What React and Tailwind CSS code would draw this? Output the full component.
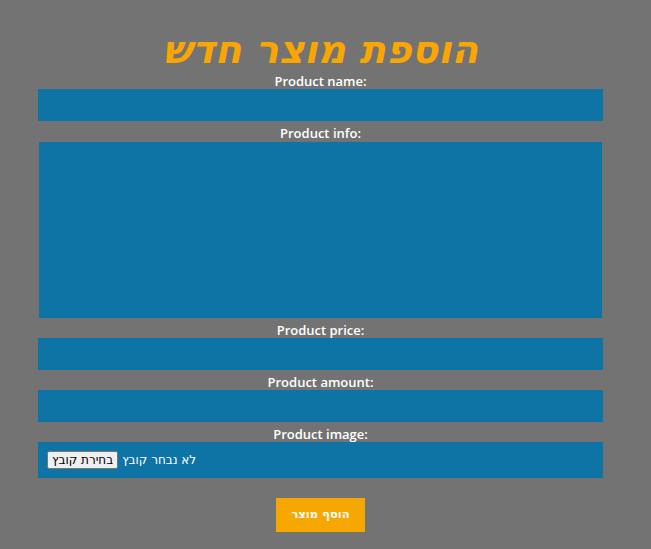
export default function App() {
  const label = "block text-center text-white font-semibold text-[13px] leading-[16px] h-[16px] font-['Open_Sans',sans-serif]";
  return (
    <div className="min-h-[549px] w-full bg-[#737373] font-['DejaVu_Sans',sans-serif]">
      <div className="ml-[38px] w-[565px] pt-[30px] flex flex-col">
        <h1 className="text-center text-[#f9a602] font-bold italic text-[39px] leading-[40px] h-[40px]" dir="rtl">
          הוספת מוצר חדש
        </h1>
        <label className={label + " mt-[3px]"}>Product name:</label>
        <div className="h-[32px] bg-[#0e73a5]" />
        <label className={label + " mt-[4px]"}>Product info:</label>
        <div className="mt-[1px] mx-[1px] h-[176px] bg-[#0e73a5]" />
        <label className={label + " mt-[4px]"}>Product price:</label>
        <div className="h-[32px] bg-[#0e73a5]" />
        <label className={label + " mt-[4px]"}>Product amount:</label>
        <div className="h-[32px] bg-[#0e73a5]" />
        <label className={label + " mt-[4px]"}>Product image:</label>
        <div className="h-[36px] bg-[#0e73a5] flex items-center pl-[9px] gap-[4px]">
          <span className="h-[18px] px-[4px] flex items-center bg-[#efefef] border border-[#767676] rounded-[2px] text-black text-[12px] leading-none">
            בחירת קובץ
          </span>
          <span className="text-white text-[12px]">לא נבחר קובץ</span>
        </div>
        <div className="flex justify-center mt-[20px]">
          <button className="w-[89px] h-[34px] bg-[#f7a800] text-white font-bold text-[11.5px]">
            הוסף מוצר
          </button>
        </div>
      </div>
    </div>
  );
}
